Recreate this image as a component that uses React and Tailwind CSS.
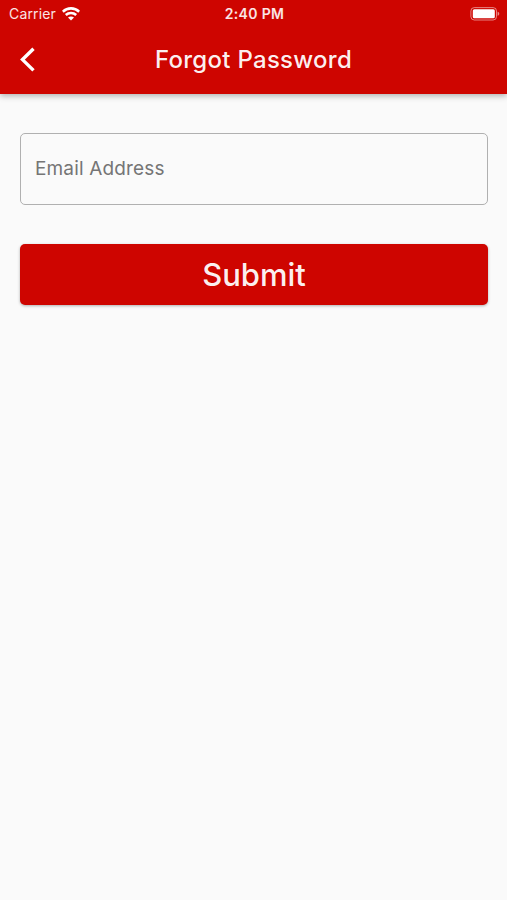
import { useState } from "react"

const WifiIcon = () => (
  <svg width="18" height="14" viewBox="0 0 18 14" fill="none" stroke="#fff" strokeWidth="2.6">
    <path d="M0.8 4.7C5.4 0.3 12.6 0.3 17.2 4.7" />
    <path d="M3.8 8C6.7 5.3 11.3 5.3 14.2 8" />
    <path d="M9 13.4L6 10.5C7.7 9 10.3 9 12 10.5Z" fill="#fff" stroke="none" />
  </svg>
)

const BatteryIcon = () => (
  <svg width="30" height="14" viewBox="0 0 30 14" fill="none">
    <rect x="0.9" y="0.6" width="25.6" height="12.4" rx="3.4" stroke="#fff" strokeOpacity="0.5" strokeWidth="1" />
    <rect x="2.8" y="2.3" width="22" height="9" rx="1.5" fill="#fff" />
    <path d="M27.6 4.8C29.8 5.4 29.8 8.2 27.6 8.8Z" fill="#fff" fillOpacity="0.55" />
  </svg>
)

const StatusBar = () => (
  <div className="grid h-[27px] grid-cols-3 items-center pl-[9px] pr-[7px] text-[14px] leading-none">
    <div className="flex items-center gap-[6px]">
      <span className="tracking-[0.15px] text-white/90">Carrier</span>
      <WifiIcon />
    </div>
    <span className="pt-px text-center text-[14px] font-semibold tracking-[0.35px] text-white/90">2:40 PM</span>
    <div className="flex justify-end">
      <BatteryIcon />
    </div>
  </div>
)

const Header = () => (
  <header className="h-[94px] bg-[#ce0500] text-white shadow-[0_2px_6px_rgba(0,0,0,0.3)]">
    <StatusBar />
    <div className="grid h-[66px] grid-cols-[60px_1fr_60px] items-center">
      <button type="button" aria-label="Back" className="pl-5">
        <svg width="16" height="26" viewBox="0 0 16 26" fill="none" stroke="#fff" strokeWidth="3.4">
          <path d="M13.5 1.8L2.5 12.6L13.5 23.4" />
        </svg>
      </button>
      <h1 className="text-center text-[24px] font-medium leading-none tracking-[0.28px] text-white/95">Forgot Password</h1>
    </div>
  </header>
)

const App = () => {
  const [email, setEmail] = useState("")

  return (
    <div className="min-h-screen bg-[#fafafa] font-['Inter',sans-serif]">
      <Header />
      <form className="flex flex-col gap-[39px] pl-5 pr-[19px] pt-[39px]" onSubmit={(e) => e.preventDefault()}>
        <input
          type="email"
          value={email}
          onChange={(e) => setEmail(e.target.value)}
          placeholder="Email Address"
          className="h-[72px] w-full rounded-[5px] border border-[#b0b0b0] pl-[14px] pr-[14px] pb-[2px] text-[19px] tracking-[0.15px] text-black outline-none placeholder:text-[#757575]"
        />
        <button
          type="submit"
          className="h-[61px] w-full rounded-[5px] bg-[#ce0500] text-[31px] font-medium leading-none text-white/95 shadow-[0_1px_3px_rgba(0,0,0,0.3)]"
        >
          Submit
        </button>
      </form>
    </div>
  )
}

export default App
